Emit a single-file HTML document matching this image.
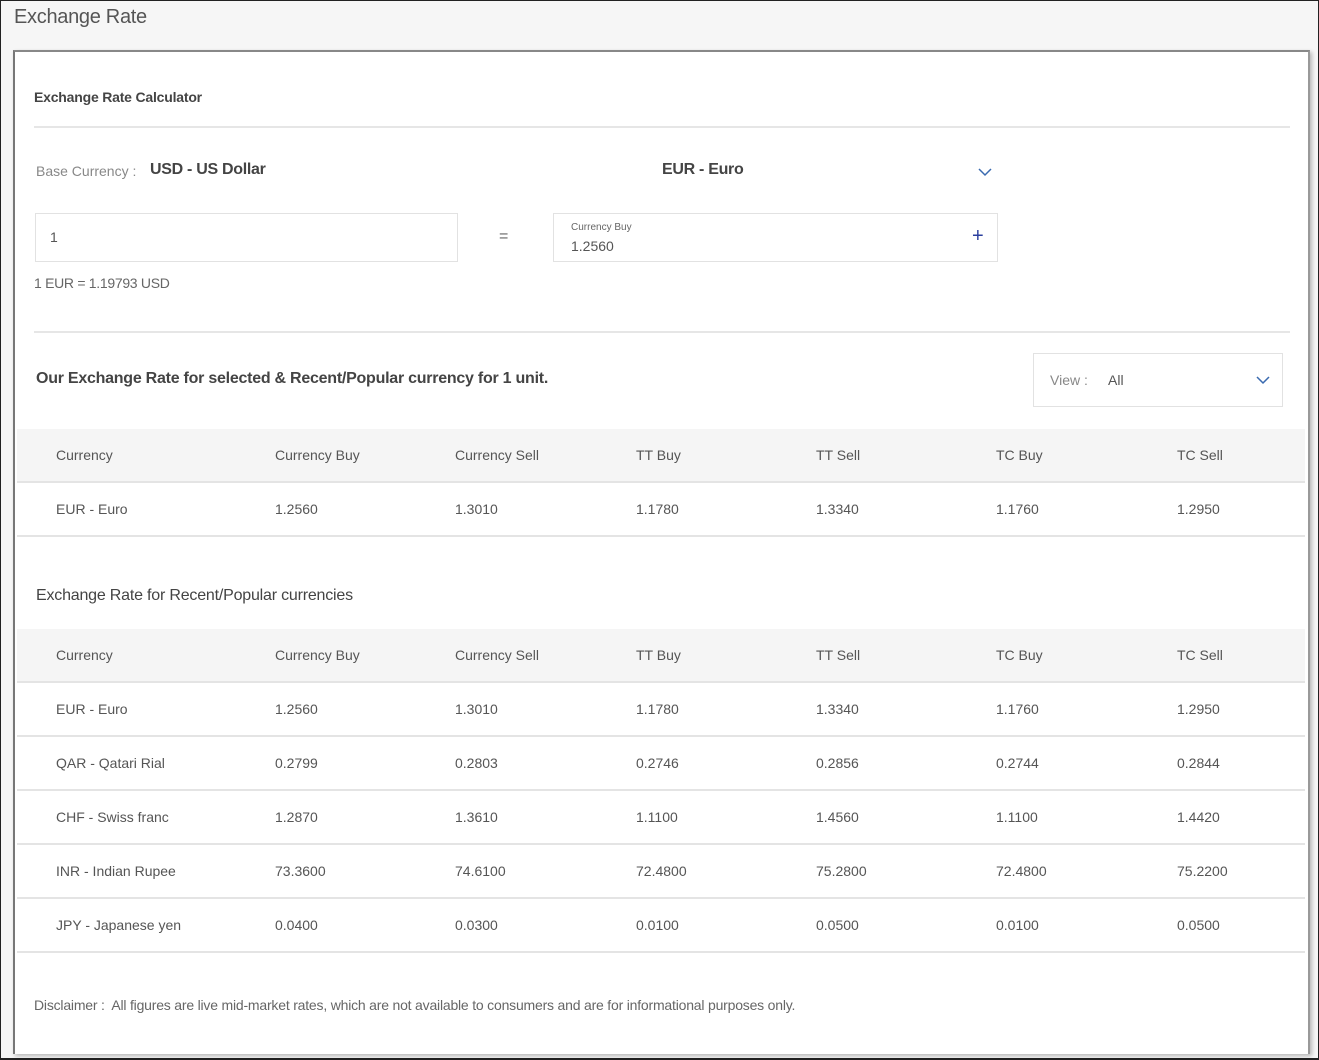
<!DOCTYPE html>
<html><head><meta charset="utf-8"><style>
*{margin:0;padding:0;box-sizing:border-box}
body{width:1319px;height:1060px;background:#f6f6f6;font-family:"Liberation Sans",sans-serif;color:#555;position:relative;overflow:hidden}
.frame{position:absolute;left:0;top:0;width:1319px;height:1060px;border:1px solid #222;border-bottom-width:2px}
.a{position:absolute;white-space:nowrap}
.card{position:absolute;left:13px;top:50px;width:1297px;height:1004px;background:#fff;border-left:2px solid #777;border-top:2px solid #888;border-right:2px solid #999;box-shadow:2px 2px 4px rgba(0,0,0,.25)}
.hr{position:absolute;height:2px;background:#e6e6e6}
.thead{position:absolute;left:17px;width:1288px;height:54px;background:#f5f5f5;border-bottom:2px solid #e4e4e4}
.row{position:absolute;left:17px;width:1288px;height:54px;border-bottom:2px solid #e4e4e4}
.c{position:absolute;top:0;line-height:52px;font-size:14px;color:#555}
</style></head><body>
<div class="frame"></div>
<div class="a" style="left:14px;top:6px;font-size:20px;color:#555;letter-spacing:-0.3px">Exchange Rate</div>
<div class="card"></div>
<div class="a" style="left:34px;top:89px;font-size:14px;font-weight:bold;color:#444;letter-spacing:-0.2px">Exchange Rate Calculator</div>
<div class="hr" style="left:34px;top:126px;width:1256px"></div>
<div class="a" style="left:36px;top:163px;font-size:14px;color:#888">Base Currency :</div>
<div class="a" style="left:150px;top:161px;font-size:16px;font-weight:bold;color:#444;letter-spacing:-0.3px">USD - US Dollar</div>
<div class="a" style="left:662px;top:161px;font-size:16px;font-weight:bold;color:#444;letter-spacing:-0.3px">EUR - Euro</div>
<svg class="a" style="left:977px;top:166px" width="16" height="12"><path d="M2 3 L8 9 L14 3" fill="none" stroke="#3a6ab0" stroke-width="1.5"/></svg>
<div class="a" style="left:35px;top:213px;width:423px;height:49px;border:1px solid #e2e2e2"></div>
<div class="a" style="left:50px;top:229px;font-size:14px;color:#555">1</div>
<div class="a" style="left:499px;top:228px;font-size:16px;color:#666">=</div>
<div class="a" style="left:553px;top:213px;width:445px;height:49px;border:1px solid #e2e2e2"></div>
<div class="a" style="left:571px;top:222px;font-size:10px;color:#666">Currency Buy</div>
<div class="a" style="left:571px;top:238px;font-size:14px;color:#555">1.2560</div>
<div class="a" style="left:972px;top:225px;font-size:20px;color:#2b3f9e;line-height:22px">+</div>
<div class="a" style="left:34px;top:275px;font-size:14px;color:#666;letter-spacing:-0.3px">1 EUR = 1.19793 USD</div>
<div class="hr" style="left:34px;top:331px;width:1256px"></div>
<div class="a" style="left:36px;top:370px;font-size:16px;font-weight:bold;color:#444;letter-spacing:-0.25px">Our Exchange Rate for selected &amp; Recent/Popular currency for 1 unit.</div>
<div class="a" style="left:1033px;top:353px;width:250px;height:54px;border:1px solid #e2e2e2"></div>
<div class="a" style="left:1050px;top:372px;font-size:14px;color:#888">View :</div>
<div class="a" style="left:1108px;top:372px;font-size:14px;color:#555">All</div>
<svg class="a" style="left:1255px;top:374px" width="16" height="12"><path d="M2 3 L8 9 L14 3" fill="none" stroke="#3a6ab0" stroke-width="1.5"/></svg>

<div class="thead" style="top:429px">
<div class="c" style="left:39px">Currency</div><div class="c" style="left:258px">Currency Buy</div><div class="c" style="left:438px">Currency Sell</div><div class="c" style="left:619px">TT Buy</div><div class="c" style="left:799px">TT Sell</div><div class="c" style="left:979px">TC Buy</div><div class="c" style="left:1160px">TC Sell</div></div>
<div class="row" style="top:483px">
<div class="c" style="left:39px">EUR - Euro</div><div class="c" style="left:258px">1.2560</div><div class="c" style="left:438px">1.3010</div><div class="c" style="left:619px">1.1780</div><div class="c" style="left:799px">1.3340</div><div class="c" style="left:979px">1.1760</div><div class="c" style="left:1160px">1.2950</div></div>

<div class="a" style="left:36px;top:587px;font-size:16px;color:#444;letter-spacing:-0.2px">Exchange Rate for Recent/Popular currencies</div>

<div class="thead" style="top:629px">
<div class="c" style="left:39px">Currency</div><div class="c" style="left:258px">Currency Buy</div><div class="c" style="left:438px">Currency Sell</div><div class="c" style="left:619px">TT Buy</div><div class="c" style="left:799px">TT Sell</div><div class="c" style="left:979px">TC Buy</div><div class="c" style="left:1160px">TC Sell</div></div>
<div class="row" style="top:683px">
<div class="c" style="left:39px">EUR - Euro</div><div class="c" style="left:258px">1.2560</div><div class="c" style="left:438px">1.3010</div><div class="c" style="left:619px">1.1780</div><div class="c" style="left:799px">1.3340</div><div class="c" style="left:979px">1.1760</div><div class="c" style="left:1160px">1.2950</div></div>
<div class="row" style="top:737px">
<div class="c" style="left:39px">QAR - Qatari Rial</div><div class="c" style="left:258px">0.2799</div><div class="c" style="left:438px">0.2803</div><div class="c" style="left:619px">0.2746</div><div class="c" style="left:799px">0.2856</div><div class="c" style="left:979px">0.2744</div><div class="c" style="left:1160px">0.2844</div></div>
<div class="row" style="top:791px">
<div class="c" style="left:39px">CHF - Swiss franc</div><div class="c" style="left:258px">1.2870</div><div class="c" style="left:438px">1.3610</div><div class="c" style="left:619px">1.1100</div><div class="c" style="left:799px">1.4560</div><div class="c" style="left:979px">1.1100</div><div class="c" style="left:1160px">1.4420</div></div>
<div class="row" style="top:845px">
<div class="c" style="left:39px">INR - Indian Rupee</div><div class="c" style="left:258px">73.3600</div><div class="c" style="left:438px">74.6100</div><div class="c" style="left:619px">72.4800</div><div class="c" style="left:799px">75.2800</div><div class="c" style="left:979px">72.4800</div><div class="c" style="left:1160px">75.2200</div></div>
<div class="row" style="top:899px">
<div class="c" style="left:39px">JPY - Japanese yen</div><div class="c" style="left:258px">0.0400</div><div class="c" style="left:438px">0.0300</div><div class="c" style="left:619px">0.0100</div><div class="c" style="left:799px">0.0500</div><div class="c" style="left:979px">0.0100</div><div class="c" style="left:1160px">0.0500</div></div>

<div class="a" style="left:34px;top:997px;font-size:14px;color:#666;letter-spacing:-0.2px">Disclaimer :&nbsp; All figures are live mid-market rates, which are not available to consumers and are for informational purposes only.</div>
</body></html>
